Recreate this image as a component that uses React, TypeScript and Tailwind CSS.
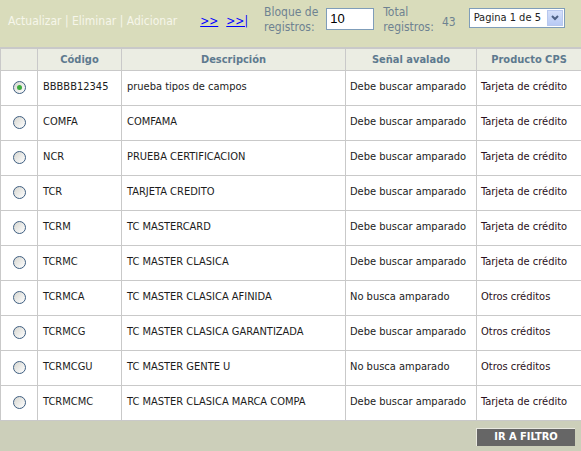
import { useState } from "react";

const rows = [
  ["BBBBB12345", "prueba tipos de campos", "Debe buscar amparado", "Tarjeta de crédito"],
  ["COMFA", "COMFAMA", "Debe buscar amparado", "Tarjeta de crédito"],
  ["NCR", "PRUEBA CERTIFICACION", "Debe buscar amparado", "Tarjeta de crédito"],
  ["TCR", "TARJETA CREDITO", "Debe buscar amparado", "Tarjeta de crédito"],
  ["TCRM", "TC MASTERCARD", "Debe buscar amparado", "Tarjeta de crédito"],
  ["TCRMC", "TC MASTER CLASICA", "Debe buscar amparado", "Tarjeta de crédito"],
  ["TCRMCA", "TC MASTER CLASICA AFINIDA", "No busca amparado", "Otros créditos"],
  ["TCRMCG", "TC MASTER CLASICA GARANTIZADA", "Debe buscar amparado", "Otros créditos"],
  ["TCRMCGU", "TC MASTER GENTE U", "No busca amparado", "Otros créditos"],
  ["TCRMCMC", "TC MASTER CLASICA MARCA COMPA", "Debe buscar amparado", "Tarjeta de crédito"],
];

function Radio({ checked }: { checked: boolean }) {
  return (
    <span className="inline-flex w-[13px] h-[13px] rounded-full border border-[#3f5f82] bg-gradient-to-br from-[#d6d6d0] to-[#ffffff] items-center justify-center">
      {checked && <span className="w-[5px] h-[5px] rounded-full bg-[#3cab3c]" />}
    </span>
  );
}

export default function App() {
  const [sel, setSel] = useState(0);
  return (
    <div className="w-[581px] h-[451px] flex flex-col bg-white text-[11px] text-[#1c1c1c] font-['DejaVu_Sans_Condensed','DejaVu_Sans',sans-serif]">
      <div className="h-[47px] bg-[#d9dcbb] flex items-start text-[12px] font-['DejaVu_Sans_Condensed','DejaVu_Sans',sans-serif]">
        <div className="pl-[8px] pt-[12px] text-[#f6f6ea] whitespace-nowrap">
          Actualizar | Eliminar | Adicionar
        </div>
        <div className="pl-[23px] pt-[12px] flex gap-[8px] text-[#0000ff]">
          <span className="underline">&gt;&gt;</span>
          <span className="underline">&gt;&gt;|</span>
        </div>
        <div className="pl-[16px] pt-[5px] text-[#6e8291] leading-[15px]">
          Bloque de<br />registros:
        </div>
        <div className="pl-[8px] pt-[8px]">
          <div className="w-[48px] h-[22px] bg-white border border-[#7f9db9] text-black text-[13px] leading-[20px] px-[3px] font-['Liberation_Sans',sans-serif]">
            10
          </div>
        </div>
        <div className="pl-[9px] pt-[5px] text-[#6e8291] leading-[15px]">
          Total<br />registros:
        </div>
        <div className="pl-[8px] pt-[13px] text-[#6e8291]">43</div>
        <div className="pl-[13px] pt-[8px]">
          <div className="w-[96px] h-[20px] bg-white border border-[#7f9db9] flex items-center pl-[4px] text-[#222] text-[11px]">
            <span className="flex-1">Pagina 1 de 5</span>
            <span className="w-[16px] h-[16px] mr-[1px] bg-gradient-to-b from-[#d5e0fa] to-[#b8caf4] border border-[#b8c8ee] flex items-center justify-center">
              <svg width="8" height="6" viewBox="0 0 8 6">
                <path d="M1 1 L4 4 L7 1" stroke="#4d6185" strokeWidth="2" fill="none" />
              </svg>
            </span>
          </div>
        </div>
      </div>
      <table className="border-collapse table-fixed w-[581px] border-t-2 border-[#c9c9c9]">
        <colgroup>
          <col className="w-[37px]" />
          <col className="w-[84px]" />
          <col className="w-[224px]" />
          <col className="w-[131px]" />
          <col className="w-[105px]" />
        </colgroup>
        <thead>
          <tr className="h-[22px] bg-[#ebede3] text-[#5e7a8f] font-bold">
            <th className="border border-[#c9c9c9] pt-[1px]"></th>
            <th className="border border-[#c9c9c9] pt-[1px]">Código</th>
            <th className="border border-[#c9c9c9] pt-[1px]">Descripción</th>
            <th className="border border-[#c9c9c9] pt-[1px]">Señal avalado</th>
            <th className="border border-[#c9c9c9] pt-[1px]">Producto CPS</th>
          </tr>
        </thead>
        <tbody>
          {rows.map((r, i) => (
            <tr key={i} className="h-[35px]" onClick={() => setSel(i)}>
              <td className="border border-[#c9c9c9] text-center align-middle">
                <span className="inline-flex align-middle"><Radio checked={sel === i} /></span>
              </td>
              <td className="border border-[#c9c9c9] pl-[5px] whitespace-nowrap">{r[0]}</td>
              <td className="border border-[#c9c9c9] pl-[5px] whitespace-nowrap">{r[1]}</td>
              <td className="border border-[#c9c9c9] pl-[4px] whitespace-nowrap">{r[2]}</td>
              <td className="border border-[#c9c9c9] pl-[4px] whitespace-nowrap text-[#2a1020]">{r[3]}</td>
            </tr>
          ))}
        </tbody>
      </table>
      <div className="flex-1 bg-[#cccfba] flex justify-end items-start pt-[7px] pr-[6px]">
        <div className="w-[99px] h-[18px] bg-[#666666] border-t border-l border-[#e9e9e0] text-white font-bold text-[11px] flex items-center justify-center">
          IR A FILTRO
        </div>
      </div>
    </div>
  );
}
